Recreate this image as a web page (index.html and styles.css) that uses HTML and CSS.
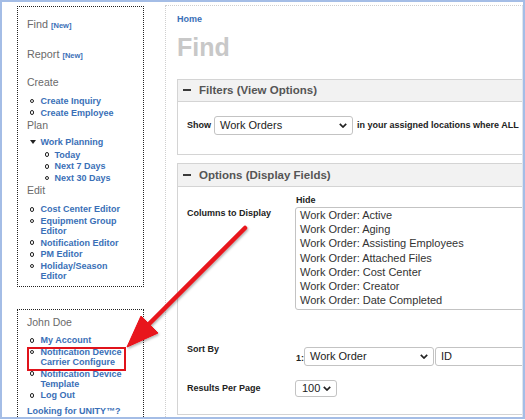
FILE: index.html
```html
<!DOCTYPE html>
<html lang="en">
<head>
<meta charset="utf-8">
<title>Find</title>
<link rel="stylesheet" href="styles.css">
</head>
<body>
<div class="frame">
  <aside class="sidebar">
    <nav class="navbox navbox-main">
      <div class="nav-title">Find <a class="new">[New]</a></div>
      <div class="nav-title title-report">Report <a class="new">[New]</a></div>
      <div class="nav-head head-create">Create</div>
      <ul class="nav-list">
        <li><span class="dot"></span><a>Create Inquiry</a></li>
        <li><span class="dot"></span><a>Create Employee</a></li>
      </ul>
      <div class="nav-head">Plan</div>
      <ul class="nav-list list-plan">
        <li class="tree">
          <div class="tree-label"><span class="tri"></span><a>Work Planning</a></div>
          <ul class="nav-list nested">
            <li><span class="dot"></span><a>Today</a></li>
            <li><span class="dot"></span><a>Next 7 Days</a></li>
            <li><span class="dot"></span><a>Next 30 Days</a></li>
          </ul>
        </li>
      </ul>
      <div class="nav-head">Edit</div>
      <ul class="nav-list">
        <li><span class="dot"></span><a>Cost Center Editor</a></li>
        <li><span class="dot"></span><a>Equipment Group Editor</a></li>
        <li><span class="dot"></span><a>Notification Editor</a></li>
        <li><span class="dot"></span><a>PM Editor</a></li>
        <li><span class="dot"></span><a>Holiday/Season Editor</a></li>
      </ul>
    </nav>
    <nav class="navbox navbox-user">
      <div class="nav-head">John Doe</div>
      <ul class="nav-list list-user">
        <li><span class="dot"></span><a>My Account</a></li>
        <li class="highlight"><span class="dot"></span><a>Notification Device Carrier Configure</a></li>
        <li><span class="dot"></span><a>Notification Device Template</a></li>
        <li><span class="dot"></span><a>Log Out</a></li>
      </ul>
      <a class="unity">Looking for UNITY™?</a>
    </nav>
  </aside>

  <main class="main">
    <a class="crumb">Home</a>
    <h1 class="page-title">Find</h1>

    <section class="panel panel-filters">
      <div class="panel-head head-filters"><span class="minus"></span>Filters (View Options)</div>
      <div class="panel-body body-filters">
        <div class="show-row">
          <span class="lbl">Show</span>
          <div class="select select-type"><span>Work Orders</span><svg class="chev" width="8" height="5" viewBox="0 0 8 5"><path d="M0.8 0.8 L4 4 L7.2 0.8" /></svg></div>
          <span class="lbl show-tail">in your assigned locations where ALL</span>
        </div>
      </div>
    </section>

    <section class="panel panel-options">
      <div class="panel-head head-options"><span class="minus"></span>Options (Display Fields)</div>
      <div class="panel-body body-options">
        <div class="opt-row row-columns">
          <div class="lbl opt-label label-columns">Columns to Display</div>
          <div class="opt-control">
            <div class="lbl hide-label">Hide</div>
            <div class="listbox">
              <div class="opt">Work Order: Active</div>
              <div class="opt">Work Order: Aging</div>
              <div class="opt">Work Order: Assisting Employees</div>
              <div class="opt">Work Order: Attached Files</div>
              <div class="opt">Work Order: Cost Center</div>
              <div class="opt">Work Order: Creator</div>
              <div class="opt">Work Order: Date Completed</div>
            </div>
          </div>
        </div>
        <div class="opt-row row-sort">
          <div class="lbl opt-label">Sort By</div>
          <div class="opt-control sort-control">
            <span class="lbl sort-num">1:</span>
            <div class="select select-sort"><span>Work Order</span><svg class="chev" width="8" height="5" viewBox="0 0 8 5"><path d="M0.8 0.8 L4 4 L7.2 0.8" /></svg></div>
            <div class="select select-field"><span>ID</span></div>
          </div>
        </div>
        <div class="opt-row row-results">
          <div class="lbl opt-label">Results Per Page</div>
          <div class="opt-control">
            <div class="select select-count"><span>100</span><svg class="chev" width="8" height="5" viewBox="0 0 8 5"><path d="M0.8 0.8 L4 4 L7.2 0.8" /></svg></div>
          </div>
        </div>
      </div>
    </section>
  </main>

  <svg class="arrow" width="525" height="420" viewBox="0 0 525 420">
    <defs>
      <filter id="shadow" x="-20%" y="-20%" width="140%" height="140%">
        <feDropShadow dx="1" dy="1.5" stdDeviation="1" flood-color="#000" flood-opacity="0.3"/>
      </filter>
    </defs>
    <g filter="url(#shadow)" fill="#e8121a" stroke="#e8121a">
      <line x1="245" y1="228" x2="146" y2="327" stroke-width="4.5" stroke-linecap="round"/>
      <polygon points="127,347 158,333 141,316" stroke-width="1" stroke-linejoin="round"/>
    </g>
  </svg>
</div>
</body>
</html>
```

FILE: styles.css
```css
body {
  margin: 0;
  background: #fff;
  font-family: "Liberation Sans", Arial, sans-serif;
}

.frame {
  position: relative;
  width: 525px;
  height: 419px;
  box-sizing: border-box;
  border: 2px solid #a4bde6;
  display: flex;
  overflow: hidden;
  background: #fff;
}

/* ---------- sidebar ---------- */
.sidebar {
  width: 163px;
  flex: none;
  box-sizing: border-box;
  padding: 4px 0 0 15px;
}

.navbox {
  width: 127px;
  box-sizing: border-box;
  border: 1px dotted #222;
  padding: 11px 9px 4px 9px;
}

.navbox-user {
  margin-top: 22px;
  padding: 6px 9px 40px 9px;
}

.nav-title {
  font-size: 10.8px;
  line-height: 13px;
  color: #6a6a6a;
}

.title-report {
  margin-top: 16px;
}

.new {
  font-size: 7.5px;
  font-weight: bold;
  color: #3a6fb7;
}

.nav-head {
  font-size: 10.5px;
  line-height: 13px;
  color: #6a6a6a;
}

.head-create {
  margin-top: 14px;
}

.nav-list {
  list-style: none;
  margin: 7px 0 0;
  padding: 0 0 0 2.5px;
}

.list-plan {
  margin-top: 5px;
}

.list-user {
  margin-top: 6px;
}

.nav-list li {
  display: flex;
  align-items: flex-start;
  margin-bottom: 1.6px;
}

.nav-list a,
.unity,
.crumb {
  font-size: 9px;
  font-weight: bold;
  line-height: 10px;
  color: #3a6fb7;
}

.unity {
  white-space: nowrap;
}

.dot {
  flex: none;
  width: 4.5px;
  height: 4.5px;
  box-sizing: border-box;
  border: 1.4px solid #222;
  border-radius: 50%;
  margin: 2.8px 6.5px 0 0;
}

.nav-list li.tree {
  display: block;
}

.tree-label {
  display: flex;
  align-items: flex-start;
}

.tri {
  flex: none;
  width: 0;
  height: 0;
  border-left: 3px solid transparent;
  border-right: 3px solid transparent;
  border-top: 4px solid #222;
  margin: 3px 5px 0 0;
}

.nested {
  margin-top: 2.5px;
  padding-left: 15px;
}

.nested .dot {
  margin-right: 5.5px;
}

.highlight {
  position: relative;
}

.highlight::after {
  content: "";
  position: absolute;
  left: -3px;
  top: 0;
  width: 99px;
  bottom: -3.6px;
  box-sizing: border-box;
  border: 2px solid #e0131b;
}

.unity {
  display: block;
  margin-top: 5.5px;
}

/* ---------- main ---------- */
.main {
  flex: 1;
  min-width: 0;
  margin-top: 3px;
  border-top: 1px dotted #cfcfcf;
  border-left: 1px dotted #cfcfcf;
  border-right: 1px solid #dfe5ee;
  padding: 7px 0 0 11px;
  overflow: hidden;
}

.crumb {
  display: block;
  line-height: 12px;
}

.page-title {
  margin: 7.3px 0 0;
  font-size: 25px;
  line-height: 30px;
  font-weight: bold;
  color: #c8c8c8;
}

.panel {
  width: 420px;
  border: 1px solid #d4d4d4;
  background: #fff;
}

.panel-filters {
  margin-top: 16.7px;
}

.panel-options {
  margin-top: 8px;
}

.panel-head {
  display: flex;
  align-items: center;
  padding-left: 5px;
  background: #f2f2f2;
  border-bottom: 1px solid #d4d4d4;
  font-size: 11.5px;
  font-weight: bold;
  color: #555;
  white-space: nowrap;
}

.head-filters {
  height: 21px;
}

.head-options {
  height: 22px;
}

.minus {
  flex: none;
  width: 7.5px;
  height: 2px;
  background: #3a3a3a;
  margin-right: 8.5px;
}

.lbl {
  font-size: 9px;
  font-weight: bold;
  line-height: 10px;
  color: #222;
  white-space: nowrap;
}

.body-filters {
  padding: 14px 0 19px 9px;
}

.show-row {
  display: flex;
  align-items: center;
  white-space: nowrap;
}

.show-tail {
  margin-left: 4px;
}

.select {
  flex: none;
  display: flex;
  align-items: center;
  justify-content: space-between;
  height: 19px;
  box-sizing: border-box;
  border: 1px solid #c3c3c3;
  border-radius: 3px;
  padding: 0 5px;
  background: #fff;
  font-size: 11px;
  color: #222;
  white-space: nowrap;
}

.chev {
  flex: none;
  fill: none;
  stroke: #222;
  stroke-width: 1.7;
}

.select-type {
  width: 139px;
  margin-left: 3px;
}

.body-options {
  padding: 8px 0 17px 9px;
}

.opt-row {
  display: flex;
  align-items: flex-start;
}

.opt-label {
  flex: none;
  width: 108px;
}

.label-columns {
  padding-top: 13px;
}

.hide-label {
  margin-bottom: 2px;
  padding-left: 1px;
}

.listbox {
  width: 260px;
  height: 103px;
  box-sizing: border-box;
  border: 1px solid #c3c3c3;
  border-radius: 3px;
  padding: 0 4px;
  overflow: hidden;
}

.opt {
  font-size: 11px;
  line-height: 14.2px;
  color: #333;
  white-space: nowrap;
}

.row-sort {
  margin-top: 34px;
}

.sort-control {
  display: flex;
  align-items: center;
  padding-top: 3px;
}

.sort-num {
  padding-top: 4px;
  padding-left: 1px;
}

.select-sort {
  width: 130px;
}

.select-field {
  width: 150px;
  margin-left: 1px;
}

.row-results {
  margin-top: 14px;
  align-items: center;
}

.select-count {
  width: 42px;
  height: 17px;
  padding-left: 6px;
}

/* ---------- annotation ---------- */
.arrow {
  position: absolute;
  left: -2px;
  top: -2px;
  pointer-events: none;
}
```
